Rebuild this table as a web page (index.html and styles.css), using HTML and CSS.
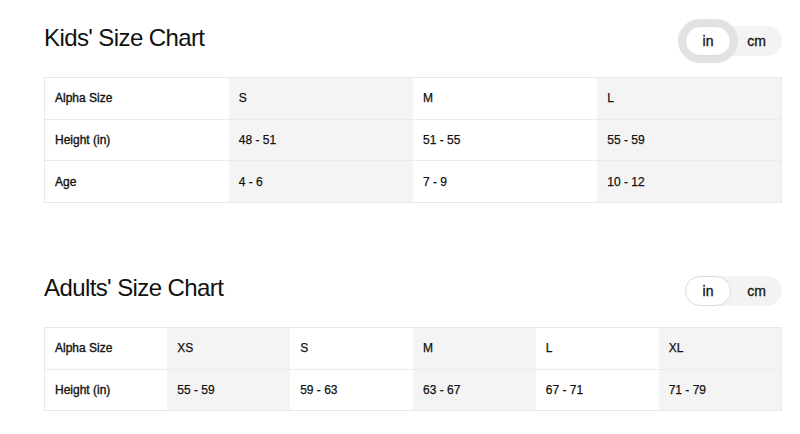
FILE: index.html
```html
<!DOCTYPE html>
<html lang="en">
<head>
<meta charset="utf-8">
<title>Size Charts</title>
<link rel="stylesheet" href="styles.css">
</head>
<body>
<main class="page">
  <section class="chart chart-kids">
    <header class="chart-head">
      <h2 class="chart-title">Kids' Size Chart</h2>
      <div class="unit-toggle">
        <button class="unit unit-active unit-focus">in</button>
        <button class="unit">cm</button>
      </div>
    </header>
    <table class="size-table">
      <tbody>
        <tr><th>Alpha Size</th><td>S</td><td>M</td><td>L</td></tr>
        <tr><th>Height (in)</th><td>48 - 51</td><td>51 - 55</td><td>55 - 59</td></tr>
        <tr><th>Age</th><td>4 - 6</td><td>7 - 9</td><td>10 - 12</td></tr>
      </tbody>
    </table>
  </section>
  <section class="chart chart-adults">
    <header class="chart-head">
      <h2 class="chart-title">Adults' Size Chart</h2>
      <div class="unit-toggle">
        <button class="unit unit-active">in</button>
        <button class="unit">cm</button>
      </div>
    </header>
    <table class="size-table">
      <tbody>
        <tr><th>Alpha Size</th><td>XS</td><td>S</td><td>M</td><td>L</td><td>XL</td></tr>
        <tr><th>Height (in)</th><td>55 - 59</td><td>59 - 63</td><td>63 - 67</td><td>67 - 71</td><td>71 - 79</td></tr>
      </tbody>
    </table>
  </section>
</main>
</body>
</html>
```

FILE: styles.css
```css
* { box-sizing: border-box; }

html, body {
  margin: 0;
  padding: 0;
  background: #ffffff;
}

body {
  font-family: "Liberation Sans", Arial, sans-serif;
  color: #111111;
}

.page {
  padding: 0 18px 0 44px;
}

.chart-kids {
  padding-top: 26px;
}

.chart-adults {
  padding-top: 73px;
}

.chart-head {
  display: flex;
  justify-content: space-between;
  align-items: flex-start;
  height: 30px;
  margin-bottom: 21px;
}

.chart-title {
  margin: 0;
  font-size: 24px;
  line-height: 24px;
  font-weight: 400;
  letter-spacing: -0.6px;
  color: #111111;
}

.unit-toggle {
  display: flex;
  height: 30px;
  background: #f3f3f3;
  border-radius: 15px;
}

.unit {
  font-family: "Liberation Sans", Arial, sans-serif;
  font-size: 14px;
  color: #111111;
  -webkit-text-stroke: 0.3px #111111;
  background: transparent;
  border: 1px solid transparent;
  border-radius: 15px;
  height: 30px;
  width: 51px;
  padding: 0;
  margin: 0;
}

.unit-active {
  width: 46px;
  background: #ffffff;
  border-color: #dcdcdc;
}

.unit-focus {
  box-shadow: 0 0 0 7px #e2e2e2;
}

.size-table {
  width: 100%;
  table-layout: fixed;
  border-collapse: collapse;
  border: 1px solid #e8e8e8;
  font-size: 12px;
}

.size-table th,
.size-table td {
  height: 41.7px;
  padding: 0 10px;
  text-align: left;
  font-weight: 400;
  -webkit-text-stroke: 0.25px #111111;
  color: #111111;
  border-top: 1px solid #ebebeb;
}

.size-table th {
  -webkit-text-stroke: 0.35px #111111;
}

.size-table tr:first-child th,
.size-table tr:first-child td {
  border-top: none;
}

.size-table td:nth-child(even) {
  background: #f4f4f4;
}
```
